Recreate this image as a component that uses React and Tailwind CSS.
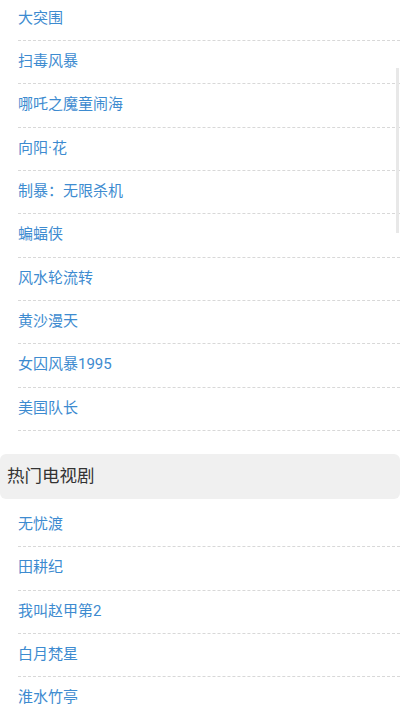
const movies = ['大突围', '扫毒风暴', '哪吒之魔童闹海', '向阳·花', '制暴：无限杀机', '蝙蝠侠', '风水轮流转', '黄沙漫天', '女囚风暴1995', '美国队长'];
const dramas = ['无忧渡', '田耕纪', '我叫赵甲第2', '白月梵星', '淮水竹亭'];

function Row({ title }) {
  return (
    <a href="#" className="ml-[18px] flex h-[43.33px] items-center border-b border-dashed border-[#d8d8d8] pb-[2px] text-[15px] text-[#3d8bd0] no-underline">
      {title}
    </a>
  );
}

export default function App() {
  return (
    <div className="relative h-[711px] overflow-hidden bg-white font-['Roboto','Noto_Sans_CJK_SC',sans-serif]">
      <div className="-mt-[2.33px]">
        {/* 热门电影 (scrolled) */}
        <div className="flex flex-col">
          {movies.map((m) => (
            <Row key={m} title={m} />
          ))}
        </div>

        {/* 热门电视剧 */}
        <div className="mt-[23px]">
          <div className="flex h-[45px] items-center rounded-md bg-[#f0f0f0] pl-[7px] text-[17.5px] text-[#333]">
            热门电视剧
          </div>
          <div className="mt-[5px] flex flex-col">
            {dramas.map((d) => (
              <Row key={d} title={d} />
            ))}
          </div>
        </div>
      </div>

      {/* scroll indicator */}
      <div className="absolute right-[1px] top-[68px] h-[165px] w-[3px] bg-[#e8e8e8]" />
    </div>
  );
}
